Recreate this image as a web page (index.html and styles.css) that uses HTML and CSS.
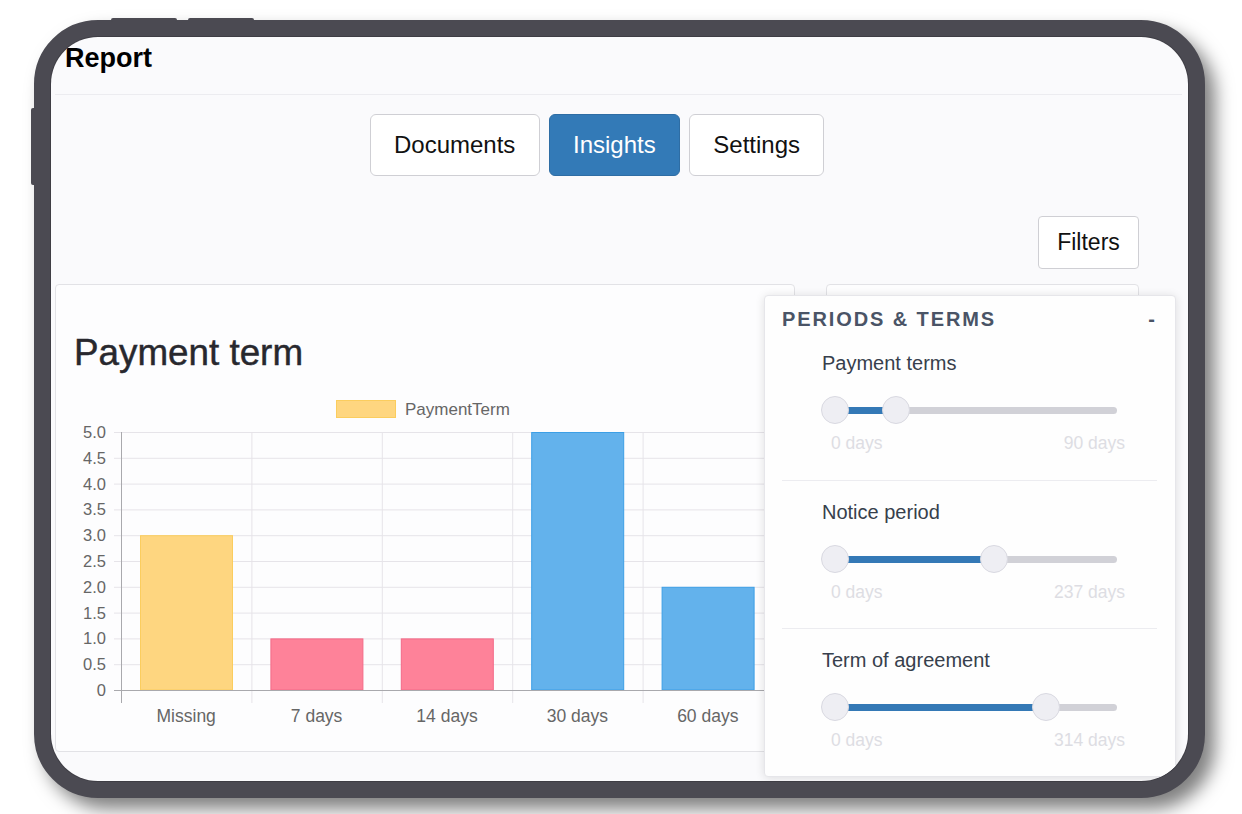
FILE: index.html
```html
<!DOCTYPE html>
<html lang="en">
<head>
<meta charset="utf-8">
<title>Report</title>
<link rel="stylesheet" href="styles.css">
</head>
<body>
<div class="tablet">
  <span class="hw hw-top1"></span>
  <span class="hw hw-top2"></span>
  <span class="hw hw-side"></span>
  <div class="screen">
    <header class="topbar"><h1>Report</h1></header>
    <main class="content">
      <nav class="tabs">
        <button class="tab">Documents</button>
        <button class="tab active">Insights</button>
        <button class="tab">Settings</button>
      </nav>
      <div class="toolbar"><button class="filters-btn">Filters</button></div>
      <div class="cards">
        <section class="card chart-card">
          <h2>Payment term</h2>
          <svg class="chart" width="738" height="345" viewBox="0 0 738 345">
            <rect x="280.5" y="10.5" width="59" height="17" fill="#fed680" stroke="#fbcd5e"/>
            <text x="349" y="25" class="legend">PaymentTerm</text>
            <g class="grid">
              <line x1="58" y1="42.5" x2="738" y2="42.5"/>
              <line x1="58" y1="68.3" x2="738" y2="68.3"/>
              <line x1="58" y1="94.1" x2="738" y2="94.1"/>
              <line x1="58" y1="119.9" x2="738" y2="119.9"/>
              <line x1="58" y1="145.7" x2="738" y2="145.7"/>
              <line x1="58" y1="171.5" x2="738" y2="171.5"/>
              <line x1="58" y1="197.3" x2="738" y2="197.3"/>
              <line x1="58" y1="223.1" x2="738" y2="223.1"/>
              <line x1="58" y1="248.9" x2="738" y2="248.9"/>
              <line x1="58" y1="274.7" x2="738" y2="274.7"/>
              <line x1="195.9" y1="42" x2="195.9" y2="313"/>
              <line x1="326.3" y1="42" x2="326.3" y2="313"/>
              <line x1="456.7" y1="42" x2="456.7" y2="313"/>
              <line x1="587.1" y1="42" x2="587.1" y2="313"/>
              <line x1="717.5" y1="42" x2="717.5" y2="313"/>
            </g>
            <g class="ylabels">
              <text x="50" y="48">5.0</text>
              <text x="50" y="73.8">4.5</text>
              <text x="50" y="99.6">4.0</text>
              <text x="50" y="125.4">3.5</text>
              <text x="50" y="151.2">3.0</text>
              <text x="50" y="177">2.5</text>
              <text x="50" y="202.8">2.0</text>
              <text x="50" y="228.6">1.5</text>
              <text x="50" y="254.4">1.0</text>
              <text x="50" y="280.2">0.5</text>
              <text x="50" y="306">0</text>
            </g>
            <rect x="84.5" y="145.7" width="92" height="154.3" fill="#fed680" stroke="#fbcd5e"/>
            <rect x="214.9" y="248.9" width="92" height="51.1" fill="#fe8299" stroke="#f36a87"/>
            <rect x="345.3" y="248.9" width="92" height="51.1" fill="#fe8299" stroke="#f36a87"/>
            <rect x="475.7" y="42.5" width="92" height="257.5" fill="#63b2ec" stroke="#3c9fe6"/>
            <rect x="606.1" y="197.3" width="92" height="102.7" fill="#63b2ec" stroke="#3c9fe6"/>
            <line class="axis" x1="65.5" y1="42" x2="65.5" y2="313"/>
            <line class="axis" x1="58" y1="300.5" x2="738" y2="300.5"/>
            <g class="xlabels">
              <text x="130.2" y="332">Missing</text>
              <text x="260.6" y="332">7 days</text>
              <text x="391" y="332">14 days</text>
              <text x="521.4" y="332">30 days</text>
              <text x="651.8" y="332">60 days</text>
            </g>
          </svg>
        </section>
        <section class="card side-card"></section>
      </div>
    </main>

    <aside class="filter-panel">
      <div class="panel-head">
        <span class="panel-title">PERIODS &amp; TERMS</span>
        <span class="panel-toggle">-</span>
      </div>
      <div class="range-group">
        <div class="range-label">Payment terms</div>
        <div class="slider">
          <span class="track"></span>
          <span class="fill" style="width:61px"></span>
          <span class="handle" style="left:0"></span>
          <span class="handle" style="left:61px"></span>
        </div>
        <div class="range-limits"><span>0 days</span><span>90 days</span></div>
      </div>
      <div class="range-group">
        <div class="range-label">Notice period</div>
        <div class="slider">
          <span class="track"></span>
          <span class="fill" style="width:159px"></span>
          <span class="handle" style="left:0"></span>
          <span class="handle" style="left:159px"></span>
        </div>
        <div class="range-limits"><span>0 days</span><span>237 days</span></div>
      </div>
      <div class="range-group">
        <div class="range-label">Term of agreement</div>
        <div class="slider">
          <span class="track"></span>
          <span class="fill" style="width:211px"></span>
          <span class="handle" style="left:0"></span>
          <span class="handle" style="left:211px"></span>
        </div>
        <div class="range-limits"><span>0 days</span><span>314 days</span></div>
      </div>
    </aside>
  </div>
</div>
</body>
</html>
```

FILE: styles.css
```css
html, body {
  margin: 0;
  padding: 0;
  width: 1242px;
  height: 814px;
  overflow: hidden;
  background: #ffffff;
  font-family: "Liberation Sans", Arial, Helvetica, sans-serif;
}

.tablet {
  position: relative;
  box-sizing: border-box;
  width: 1171px;
  height: 778px;
  margin: 20px 0 0 34px;
  border: 17px solid #4b4a52;
  border-radius: 64px;
  box-shadow: 10px 11px 18px rgba(0, 0, 0, 0.5);
  background: #4b4a52;
}

.hw {
  position: absolute;
  background: #4b4a52;
  border-radius: 2px;
}
.hw-top1 { top: -19px; left: 60px; width: 66px; height: 4px; }
.hw-top2 { top: -19px; left: 137px; width: 66px; height: 4px; }
.hw-side { top: 71px; left: -20px; width: 5px; height: 77px; }

.screen {
  position: relative;
  width: 100%;
  height: 100%;
  border-radius: 47px;
  overflow: hidden;
  background: #fafafc;
  box-shadow: 0 0 0 1px #3e3d44;
}

.topbar {
  box-sizing: border-box;
  height: 58px;
  margin: 0 6px 0 4px;
  padding: 6px 0 0 10px;
  border-bottom: 1px solid #ececf0;
}
.topbar h1 {
  margin: 0;
  font-size: 27px;
  line-height: 30px;
  font-weight: bold;
  color: #000;
}

.content {
  width: 1084px;
  margin-left: 4px;
}

.tabs {
  display: flex;
  justify-content: center;
  gap: 9px;
  margin-top: 19px;
}
.tab {
  box-sizing: border-box;
  height: 62px;
  padding: 0 23.3px;
  font-family: inherit;
  font-size: 24px;
  color: #111;
  background: #fff;
  border: 1px solid #cfcfd4;
  border-radius: 6px;
}
.tab.active {
  background: #337ab7;
  border-color: #2e6da4;
  color: #fff;
}

.toolbar {
  display: flex;
  justify-content: flex-end;
  margin-top: 40px;
}
.filters-btn {
  box-sizing: border-box;
  width: 101px;
  height: 53px;
  font-family: inherit;
  font-size: 23px;
  color: #111;
  background: #fff;
  border: 1px solid #cfcfd4;
  border-radius: 4px;
}

.cards {
  display: flex;
  gap: 31px;
  margin-top: 15px;
}
.card {
  box-sizing: border-box;
  height: 468px;
  background: #fdfdfe;
  border: 1px solid #e2e2e6;
  border-radius: 4px;
}
.chart-card {
  width: 740px;
  padding: 48px 0 0 0;
}
.chart-card h2 {
  margin: 0 0 17px 18px;
  font-size: 36.8px;
  line-height: 40px;
  font-weight: normal;
  color: #28282e;
  -webkit-text-stroke: 0.45px #28282e;
}
.side-card {
  width: 313px;
}

.chart { display: block; }
.chart .grid line { stroke: #e6e4e9; stroke-width: 1; }
.chart .axis { stroke: #a9a9ad; stroke-width: 1; }
.chart text {
  font-family: "Liberation Sans", Arial, sans-serif;
  fill: #666;
}
.chart .legend { font-size: 17px; }
.chart .ylabels text { font-size: 16.5px; text-anchor: end; }
.chart .xlabels text { font-size: 17.5px; text-anchor: middle; }

.filter-panel {
  position: absolute;
  left: 713px;
  top: 258px;
  box-sizing: border-box;
  width: 412px;
  padding: 0 18px 0 17px;
  background: #fefefe;
  border: 1px solid #e6e6ea;
  border-radius: 4px;
  box-shadow: 0 1px 10px rgba(0, 0, 0, 0.12);
}
.panel-head {
  display: flex;
  justify-content: space-between;
  box-sizing: border-box;
  height: 36px;
  padding-top: 11px;
  line-height: 24px;
}
.panel-title {
  font-size: 20px;
  font-weight: bold;
  letter-spacing: 1.9px;
  color: #4a5466;
}
.panel-toggle {
  font-size: 20px;
  font-weight: bold;
  color: #4a5466;
  padding-right: 2px;
}

.range-group {
  box-sizing: border-box;
  height: 148px;
  padding: 19px 0 0 40px;
}
.range-group + .range-group {
  border-top: 1px solid #ececf0;
}
.range-label {
  font-size: 20px;
  line-height: 24px;
  color: #373f4c;
}
.slider {
  position: relative;
  width: 296px;
  height: 28px;
  margin: 21px 0 0 -1px;
}
.track {
  position: absolute;
  left: 14px;
  right: 0;
  top: 11px;
  height: 7px;
  border-radius: 4px;
  background: #d1d1d7;
}
.fill {
  position: absolute;
  left: 14px;
  top: 11px;
  height: 7px;
  background: #3479b6;
}
.handle {
  position: absolute;
  top: 0;
  box-sizing: border-box;
  width: 28px;
  height: 28px;
  border-radius: 50%;
  background: #eeeef3;
  border: 1px solid #d9d9e1;
}
.range-limits {
  display: flex;
  justify-content: space-between;
  width: 294px;
  margin: 9px 0 0 9px;
  font-size: 17.5px;
  line-height: 20px;
  color: #dddde3;
}
```
